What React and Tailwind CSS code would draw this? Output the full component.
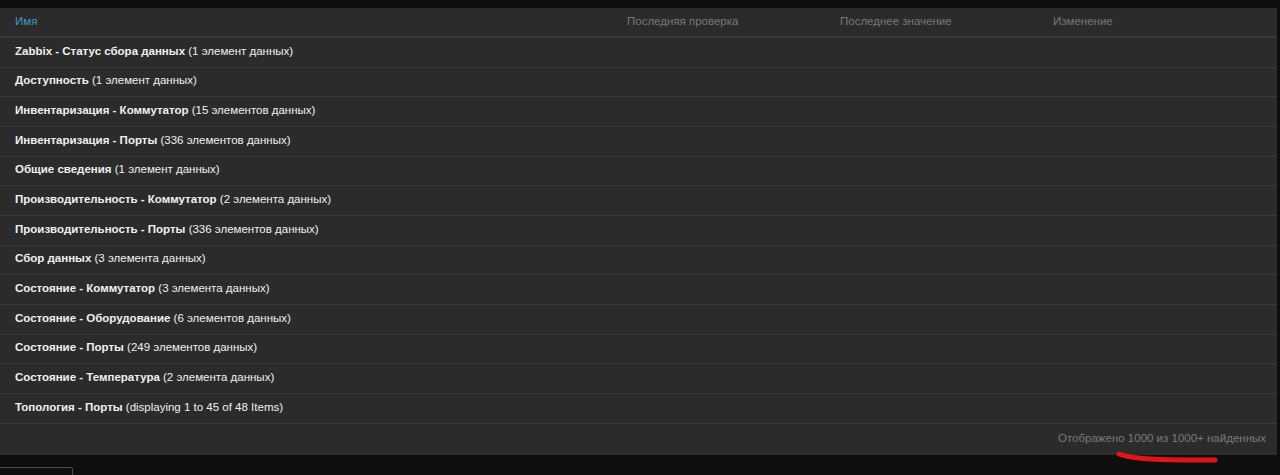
import React from "react";

const rows = [
  ["Zabbix - Статус сбора данных", "(1 элемент данных)"],
  ["Доступность", "(1 элемент данных)"],
  ["Инвентаризация - Коммутатор", "(15 элементов данных)"],
  ["Инвентаризация - Порты", "(336 элементов данных)"],
  ["Общие сведения", "(1 элемент данных)"],
  ["Производительность - Коммутатор", "(2 элемента данных)"],
  ["Производительность - Порты", "(336 элементов данных)"],
  ["Сбор данных", "(3 элемента данных)"],
  ["Состояние - Коммутатор", "(3 элемента данных)"],
  ["Состояние - Оборудование", "(6 элементов данных)"],
  ["Состояние - Порты", "(249 элементов данных)"],
  ["Состояние - Температура", "(2 элемента данных)"],
  ["Топология - Порты", "(displaying 1 to 45 of 48 Items)"],
];

export default function App() {
  return (
    <div
      className="w-[1280px] h-[475px] bg-[#0e0e0f] overflow-hidden text-[11.5px]"
      style={{ fontFamily: '"Liberation Sans", Arial, sans-serif' }}
    >
      <div className="h-[8px]" />
      <div className="w-[1277px] bg-[#2b2b2b]">
        <div className="flex h-[30px] items-center border-b-2 border-[#383838] text-[#787878]">
          <div className="w-[612px] pl-[15px] text-[#4796c4]">Имя</div>
          <div className="w-[213px] pl-[15px]">Последняя проверка</div>
          <div className="w-[213px] pl-[15px]">Последнее значение</div>
          <div className="pl-[15px]">Изменение</div>
        </div>
        {rows.map(([b, n], i) => (
          <div
            key={i}
            className="flex h-[29.67px] items-center border-b border-[#383838] pl-[15px] pb-[2px] text-[#f0f0f0]"
          >
            <span className="font-bold">{b}</span>
            <span>&nbsp;{n}</span>
          </div>
        ))}
        <div className="flex h-[31px] items-center justify-end pr-[11px] text-[#7a7a7a]">
          Отображено 1000 из 1000+ найденных
        </div>
      </div>
      <div className="relative h-[20px]">
        <svg className="absolute left-[1115px] top-[-4px]" width="105" height="14" viewBox="0 0 105 14">
          <path d="M4 3 C 20 9, 50 9, 100 9" stroke="#e3131a" strokeWidth="5" strokeLinecap="round" fill="none" />
        </svg>
        <div className="absolute left-[-20px] top-[12px] h-[24px] w-[93px] border border-[#4a4a4a] rounded-[2px] px-[20px] pt-[5px] text-[#bbbbbb] whitespace-nowrap overflow-hidden">
          Применить
        </div>
      </div>
    </div>
  );
}
